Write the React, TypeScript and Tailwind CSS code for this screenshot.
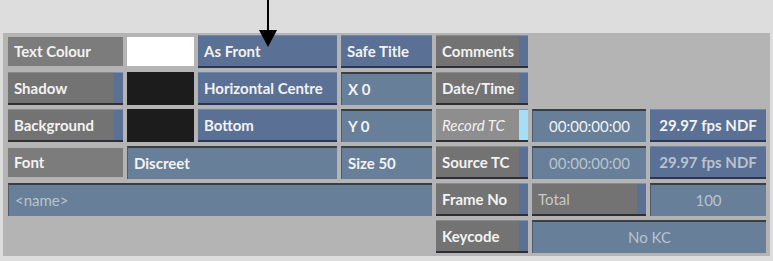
import type { ReactNode } from 'react'

const FONT = { fontFamily: 'Lato, "Liberation Sans", Arial, sans-serif' }

type Kind = 'label' | 'gray' | 'blue' | 'field' | 'record'

function Cell({
  kind,
  children,
  className = '',
  dim,
  center,
  italic,
}: {
  kind: Kind
  children?: ReactNode
  className?: string
  dim?: boolean
  center?: boolean
  italic?: boolean
}) {
  const text = dim ? 'text-[#b9c3ce]' : 'text-[#f2f2f2]'
  const align = center ? 'justify-center' : 'justify-start pl-[6px]'
  const style = italic ? 'italic' : ''

  if (kind === 'label') {
    return (
      <div className={`flex items-center ${align} my-[2px] bg-[#7c7c7c] ${text} ${className}`}>
        {children}
      </div>
    )
  }
  if (kind === 'field') {
    return (
      <div
        className={`flex items-center ${align} bg-[#687f99] border-t-2 border-l border-t-[#3a3d42] border-l-[#4e5b6b] ${text} ${className}`}
      >
        {children}
      </div>
    )
  }
  if (kind === 'blue') {
    return (
      <div
        className={`flex items-center ${align} bg-[#5a7094] border-b-2 border-b-[#2b3552] border-t border-t-[#7188ab] ${text} ${className}`}
      >
        {children}
      </div>
    )
  }
  // gray / record: buttons with a coloured strip on the right
  const body = kind === 'record' ? 'bg-[#8e8e8e]' : 'bg-[#737373]'
  const strip = kind === 'record' ? 'bg-[#a6ddf7]' : 'bg-[#5a7094]'
  return (
    <div className={`flex border-b-2 border-b-[#2f2f33] ${className}`}>
      <div className={`flex-1 flex items-center ${align} ${body} border-t border-t-[#8a8a8a] ${text} ${style}`}>
        {children}
      </div>
      <div className={`w-[9px] ${strip} border-t border-t-[#7b90b0]`} />
    </div>
  )
}

export default function App() {
  return (
    <div className="w-[773px] h-[261px] bg-[#dddddd] relative overflow-hidden" style={FONT}>
      <div className="absolute left-[3px] top-[33px] w-[767px] h-[223px] bg-[#b4b4b4] pl-[5px] pt-[2px]">
        <div className="grid grid-cols-[115px_67px_139px_91px_92px_114px_116px] grid-rows-[33px_33px_33px_33px_33px_33px] gap-x-[4px] gap-y-[4px] text-[15px] font-bold">
          {/* row 1 */}
          <Cell kind="label">Text Colour</Cell>
          <div className="my-[2px] bg-white" />
          <Cell kind="blue">As Front</Cell>
          <Cell kind="blue">Safe Title</Cell>
          <Cell kind="gray">Comments</Cell>
          <div className="col-span-2" />

          {/* row 2 */}
          <Cell kind="gray">Shadow</Cell>
          <div className="bg-[#1c1c1c]" />
          <Cell kind="blue">Horizontal Centre</Cell>
          <Cell kind="field">X 0</Cell>
          <Cell kind="gray">Date/Time</Cell>
          <div className="col-span-2" />

          {/* row 3 */}
          <Cell kind="gray">Background</Cell>
          <div className="bg-[#1c1c1c]" />
          <Cell kind="blue">Bottom</Cell>
          <Cell kind="field">Y 0</Cell>
          <Cell kind="record" italic>
            <span className="font-normal">Record TC</span>
          </Cell>
          <Cell kind="field" center>
            <span className="font-normal">00:00:00:00</span>
          </Cell>
          <Cell kind="blue" center>29.97 fps NDF</Cell>

          {/* row 4 */}
          <Cell kind="label">Font</Cell>
          <Cell kind="field" className="col-span-2">Discreet</Cell>
          <Cell kind="field">Size 50</Cell>
          <Cell kind="gray">Source TC</Cell>
          <Cell kind="field" center dim>
            <span className="font-normal">00:00:00:00</span>
          </Cell>
          <Cell kind="blue" center dim>29.97 fps NDF</Cell>

          {/* row 5 */}
          <Cell kind="field" className="col-span-4" dim>
            <span className="font-normal">&lt;name&gt;</span>
          </Cell>
          <Cell kind="gray">Frame No</Cell>
          <Cell kind="gray" dim>
            <span className="font-normal text-[#c9c9c9]">Total</span>
          </Cell>
          <Cell kind="field" center dim>
            <span className="font-normal">100</span>
          </Cell>

          {/* row 6 */}
          <div className="col-span-4" />
          <Cell kind="gray">Keycode</Cell>
          <Cell kind="field" className="col-span-2" center dim>
            <span className="font-normal">No KC</span>
          </Cell>
        </div>
      </div>

      {/* pointer arrow, drawn over the panel */}
      <svg className="absolute left-[256px] top-0 z-10" width="24" height="50" viewBox="0 0 24 50">
        <line x1="12" y1="0" x2="12" y2="32" stroke="#000" strokeWidth="2" />
        <polygon points="3,30 21,30 12,47" fill="#000" />
      </svg>
    </div>
  )
}
